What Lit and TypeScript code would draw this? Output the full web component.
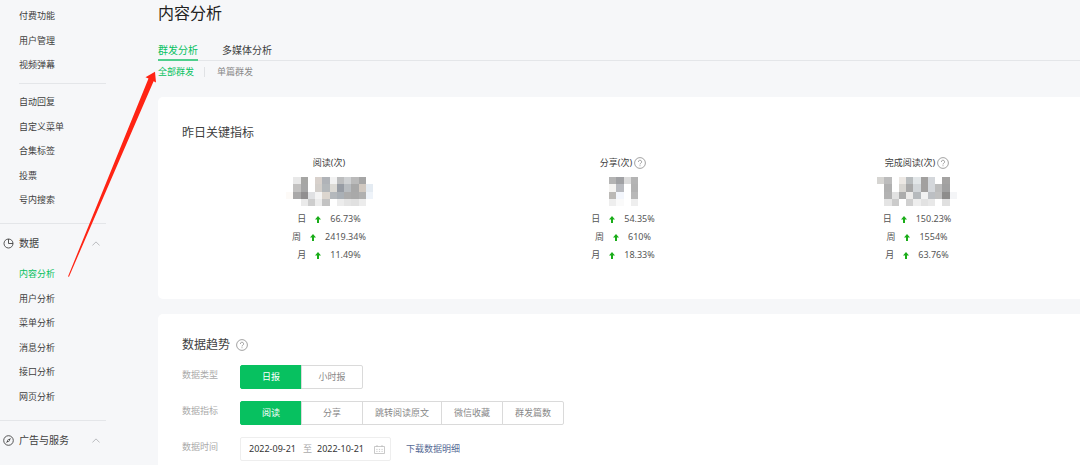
import { LitElement, html, svg, css } from "lit";
import { customElement, state } from "lit/decorators.js";
import { classMap } from "lit/directives/class-map.js";

const help = html`<svg class="help" viewBox="0 0 12 12" aria-hidden="true">
  <circle cx="6" cy="6" r="5.4" fill="none" stroke="#8a8a8a" stroke-width=".8" />
  <path d="M4.4 4.9a1.6 1.6 0 1 1 2.4 1.3c-.6.35-.8.6-.8 1.2M6 8.3v.9" fill="none" stroke="#8a8a8a" stroke-width=".8" />
</svg>`;

const up = html`<svg class="up" viewBox="0 0 6 7" role="img" aria-label="上升"><path d="M3 0 6 3.4H4V7H2V3.4H0z" fill="#1aad19" /></svg>`;

const chevron = html`<svg class="chevron" viewBox="0 0 8 5" aria-hidden="true"><path d="M.4 4.5 4 .9l3.6 3.6" fill="none" stroke="#b4b6b9" stroke-width=".9" /></svg>`;

const pie = html`<svg class="icon" viewBox="0 0 11 11" aria-hidden="true"><path d="M5.5 1A4.5 4.5 0 1 0 10 5.5 4.5 4.5 0 0 0 5.5 1zM5.5 1v4.5H10" fill="none" stroke="#444" stroke-width=".9" /></svg>`;

const compass = html`<svg class="icon" viewBox="0 0 11 11" aria-hidden="true"><circle cx="5.5" cy="5.5" r="4.8" fill="none" stroke="#444" stroke-width=".9" /><path d="M8 3 6.3 6.3 3 8l1.7-3.3z" fill="#444" /><circle cx="5.5" cy="5.5" r=".6" fill="#f6f7f9" /></svg>`;

const calendar = html`<svg class="cal" viewBox="0 0 11 9" aria-hidden="true"><path d="M.5 1.5h10v7H.5zM3 0v2M8 0v2M2.3 4.4h1.2M4.9 4.4h1.2M7.5 4.4h1.2M2.3 6.4h1.2M4.9 6.4h1.2M7.5 6.4h1.2" fill="none" stroke="#bbb" stroke-width=".8" /></svg>`;

const metrics = [
  {
    name: "阅读(次)", tip: false,
    rows: [["日", "66.73%"], ["周", "2419.34%"], ["月", "11.49%"]],
    blur: [
      "#fff #e8e8e8 #a6a6a4 #fff #d8d1cc #b0b3b8 #f2f2f2 #bcbdbe #cfd1d3 #bababa #a6a6a6 #fff",
      "#fff #c2c1c0 #a6a6a6 #fff #d3cfcb #b4b8bb #dcdad5 #979ca4 #b8bcc0 #a8a8a8 #d0c8c0 #e4ebf2",
      "#fdfaf7 #a9a8a8 #918f90 #e0e1e3 #f4f4f4 #dcd6cf #b4b8bc #aab0b6 #acacac #a9a9a9 #b0b0b0 #eef3f9",
      "#fff #fff #eaeaea #cdcdcd #ececec #c3c3c3 #fff #ececec #e4e4e4 #e0e0e0 #ececec #fff",
    ],
  },
  {
    name: "分享(次)", tip: true,
    rows: [["日", "54.35%"], ["周", "610%"], ["月", "18.33%"]],
    blur: [
      "#b4b4b4 #a0a1a4 #dcdcdc #b4b4b4",
      "#f5f4f2 #b9bbc0 #fff #b2b2b2",
      "#bbb9b6 #f3f6fc #fff #b8b8b8",
      "#eee #fafafa #fff #eee",
    ],
  },
  {
    name: "完成阅读(次)", tip: true,
    rows: [["日", "150.23%"], ["周", "1554%"], ["月", "63.76%"]],
    blur: [
      "#d6d5d2 #bcbcbc #fff #ece8e4 #b8bcbe #e2e6e8 #a2a09f #d4d7db #fff #a4a3a2 #fff",
      "#fff #b0b0b0 #fff #d8d6d2 #a8a8a8 #d2d6d9 #a2a09f #d4d7db #bcbcbc #a0a0a0 #fff",
      "#fff #b2b2b2 #e2e2e2 #acacac #ecebea #b6babd #f2f2f2 #bcbfc3 #c0c0c0 #8e8d8c #f4f5f7",
      "#fff #e4e4e4 #cbcbcb #fff #d0d0d0 #eee #e2e2e2 #e8e8e8 #fff #e0e0e0 #fff",
    ],
  },
];

const mosaic = (lines: string[]) => {
  const cells = lines.map((l) => l.split(" "));
  return html`<svg class="mosaic" viewBox="0 0 ${cells[0].length} ${cells.length}" role="img" aria-label="已隐藏" shape-rendering="crispEdges">
    ${cells.map((row, y) => row.map((c, x) => svg`<rect x=${x} y=${y} width="1" height="1" fill=${c} />`))}
  </svg>`;
};

@customElement("app-root")
export class AppRoot extends LitElement {
  @state() private type = "日报";
  @state() private metric = "阅读";

  static styles = css`
    :host {
      display: block;
      position: relative;
      height: 100vh;
      overflow: hidden;
      background: #f6f7f9;
      color: #404040;
      font: 9px/12px "Noto Sans", "Noto Sans CJK SC", sans-serif;
    }
    * { box-sizing: border-box; }
    a { color: inherit; text-decoration: none; }
    h1, h2, h3, p, ul { margin: 0; padding: 0; font-weight: 400; }
    ul { list-style: none; }
    svg { display: block; flex: none; }
    button, input { font: inherit; color: inherit; margin: 0; }

    .page { display: flex; gap: 52px; }
    .side { flex: none; width: 106px; padding-top: 4px; }
    .menu li { display: flex; align-items: center; height: 24px; padding-left: 19px; }
    .menu li:nth-child(even) { height: 25px; }
    .menu .current { color: #07c160; }
    .rule { height: 1px; background: #e4e6e9; margin-top: 11px; }
    .rule.inset { margin: 6px 0 6px 19px; }
    .group { display: flex; align-items: center; width: 100%; height: 38px; padding: 0 6px 0 3px; gap: 5px;
      border: 0; background: none; font-size: 10px; text-align: left; }
    .group span { flex: 1; }
    .icon { width: 11px; height: 11px; }
    .chevron { width: 8px; height: 5px; }

    .main { flex: 1; min-width: 0; }
    .title { font-size: 16px; line-height: 24px; padding-top: 1px; color: #222; }
    .tabs { display: flex; gap: 24px; margin-top: 16px; font-size: 10px; border-bottom: 1px solid #e4e6e9; }
    .tabs a { line-height: 18px; margin-bottom: -1px; border-bottom: 2px solid transparent; }
    .tabs .on { color: #07c160; border-color: #4fcf8d; }
    .subtabs { display: flex; align-items: center; margin-top: 5px; color: #888; }
    .subtabs .on { color: #07c160; }
    .subtabs a + a { margin-left: 10px; padding-left: 12px; border-left: 1px solid #e0e2e5; line-height: 10px; }

    .card { background: #fff; border-radius: 5px 0 0 5px; padding: 26px 16px 35px 24px; }
    .summary { margin-top: 19px; }
    .trend { margin-top: 15px; padding-top: 21px; }
    .heading { display: flex; align-items: center; gap: 6px; font-size: 12px; line-height: 20px; }
    .help { width: 12px; height: 12px; }

    .metrics { display: grid; grid-template-columns: repeat(3, 1fr); margin-top: 14px; }
    .metric { display: flex; flex-direction: column; align-items: center; }
    .name { display: flex; align-items: center; gap: 2px; font-size: 9px; }
    .mosaic { height: 29px; margin: 8px 0 4px; }
    .change { display: flex; align-items: center; gap: 9px; line-height: 18px; color: #555; }
    .up { width: 6px; height: 7px; }

    .fields { display: grid; grid-template-columns: 58px 1fr; row-gap: 12px; margin-top: 10px; }
    .label { line-height: 20px; color: #aaa; }
    .segments { display: flex; }
    .segments button { min-width: 62px; height: 24px; padding: 0 12px; border: 1px solid #dadada; background: #fff; color: #888; cursor: pointer; white-space: nowrap; }
    .segments button + button { margin-left: -1px; }
    .segments button:first-child { border-radius: 2px 0 0 2px; }
    .segments button:last-child { border-radius: 0 2px 2px 0; }
    .segments .on { background: #07c160; border-color: #07c160; color: #fff; }
    .time { display: flex; align-items: center; gap: 15px; }
    .range { display: flex; align-items: center; gap: 5px; height: 24px; padding: 0 5px 0 8px; border: 1px solid #eee; border-radius: 2px; color: #aaa; }
    .range input { width: 49px; padding: 0; border: 0; outline: 0; background: none; color: #353535; }
    .cal { width: 11px; height: 9px; margin-left: 3px; }
    .link { color: #576b95; }

    .pointer { position: absolute; left: 68px; top: 71px; width: 89px; height: 206px; pointer-events: none; }
  `;

  private menu(items: string[], current = "") {
    return html`<ul class="menu">
      ${items.map((i) => html`<li><a href="#" class=${classMap({ current: i === current })}>${i}</a></li>`)}
    </ul>`;
  }

  private segments(label: string, items: string[], value: string, pick: (v: string) => void) {
    return html`<span class="label" id=${label}>${label}</span>
      <div class="segments" role="group" aria-labelledby=${label}>
        ${items.map((i) => html`<button type="button" class=${classMap({ on: i === value })} aria-pressed=${i === value} @click=${() => pick(i)}>${i}</button>`)}
      </div>`;
  }

  render() {
    return html`
      <div class="page">
        <nav class="side">
          ${this.menu(["付费功能", "用户管理", "视频弹幕"])}
          <div class="rule inset"></div>
          ${this.menu(["自动回复", "自定义菜单", "合集标签", "投票", "号内搜索"])}
          <div class="rule"></div>
          <button class="group" type="button">${pie}<span>数据</span>${chevron}</button>
          ${this.menu(["内容分析", "用户分析", "菜单分析", "消息分析", "接口分析", "网页分析"], "内容分析")}
          <div class="rule"></div>
          <button class="group" type="button">${compass}<span>广告与服务</span>${chevron}</button>
        </nav>
        <main class="main">
          <h1 class="title">内容分析</h1>
          <nav class="tabs"><a href="#" class="on">群发分析</a><a href="#">多媒体分析</a></nav>
          <nav class="subtabs"><a href="#" class="on">全部群发</a><a href="#">单篇群发</a></nav>
          <section class="card summary">
            <h2 class="heading">昨日关键指标</h2>
            <div class="metrics">
              ${metrics.map((m) => html`<div class="metric">
                <h3 class="name">${m.name}${m.tip ? help : ""}</h3>
                ${mosaic(m.blur)}
                ${m.rows.map(([k, v]) => html`<p class="change"><span>${k}</span>${up}<span>${v}</span></p>`)}
              </div>`)}
            </div>
          </section>
          <section class="card trend">
            <h2 class="heading">数据趋势${help}</h2>
            <div class="fields">
              ${this.segments("数据类型", ["日报", "小时报"], this.type, (v) => (this.type = v))}
              ${this.segments("数据指标", ["阅读", "分享", "跳转阅读原文", "微信收藏", "群发篇数"], this.metric, (v) => (this.metric = v))}
              <label class="label" for="from">数据时间</label>
              <div class="time">
                <div class="range">
                  <input id="from" value="2022-09-21" />
                  <label for="to">至</label>
                  <input id="to" value="2022-10-21" />
                  ${calendar}
                </div>
                <a class="link" href="#">下载数据明细</a>
              </div>
            </div>
          </section>
        </main>
      </div>
      <svg class="pointer" viewBox="0 0 89 206" aria-hidden="true">
        <path d="M0 205.5 80.5 7.5 77.5 6.2 87 .8 88 11.6 85.6 10.2 1 205.7z" fill="#ff2414" />
      </svg>
    `;
  }
}
